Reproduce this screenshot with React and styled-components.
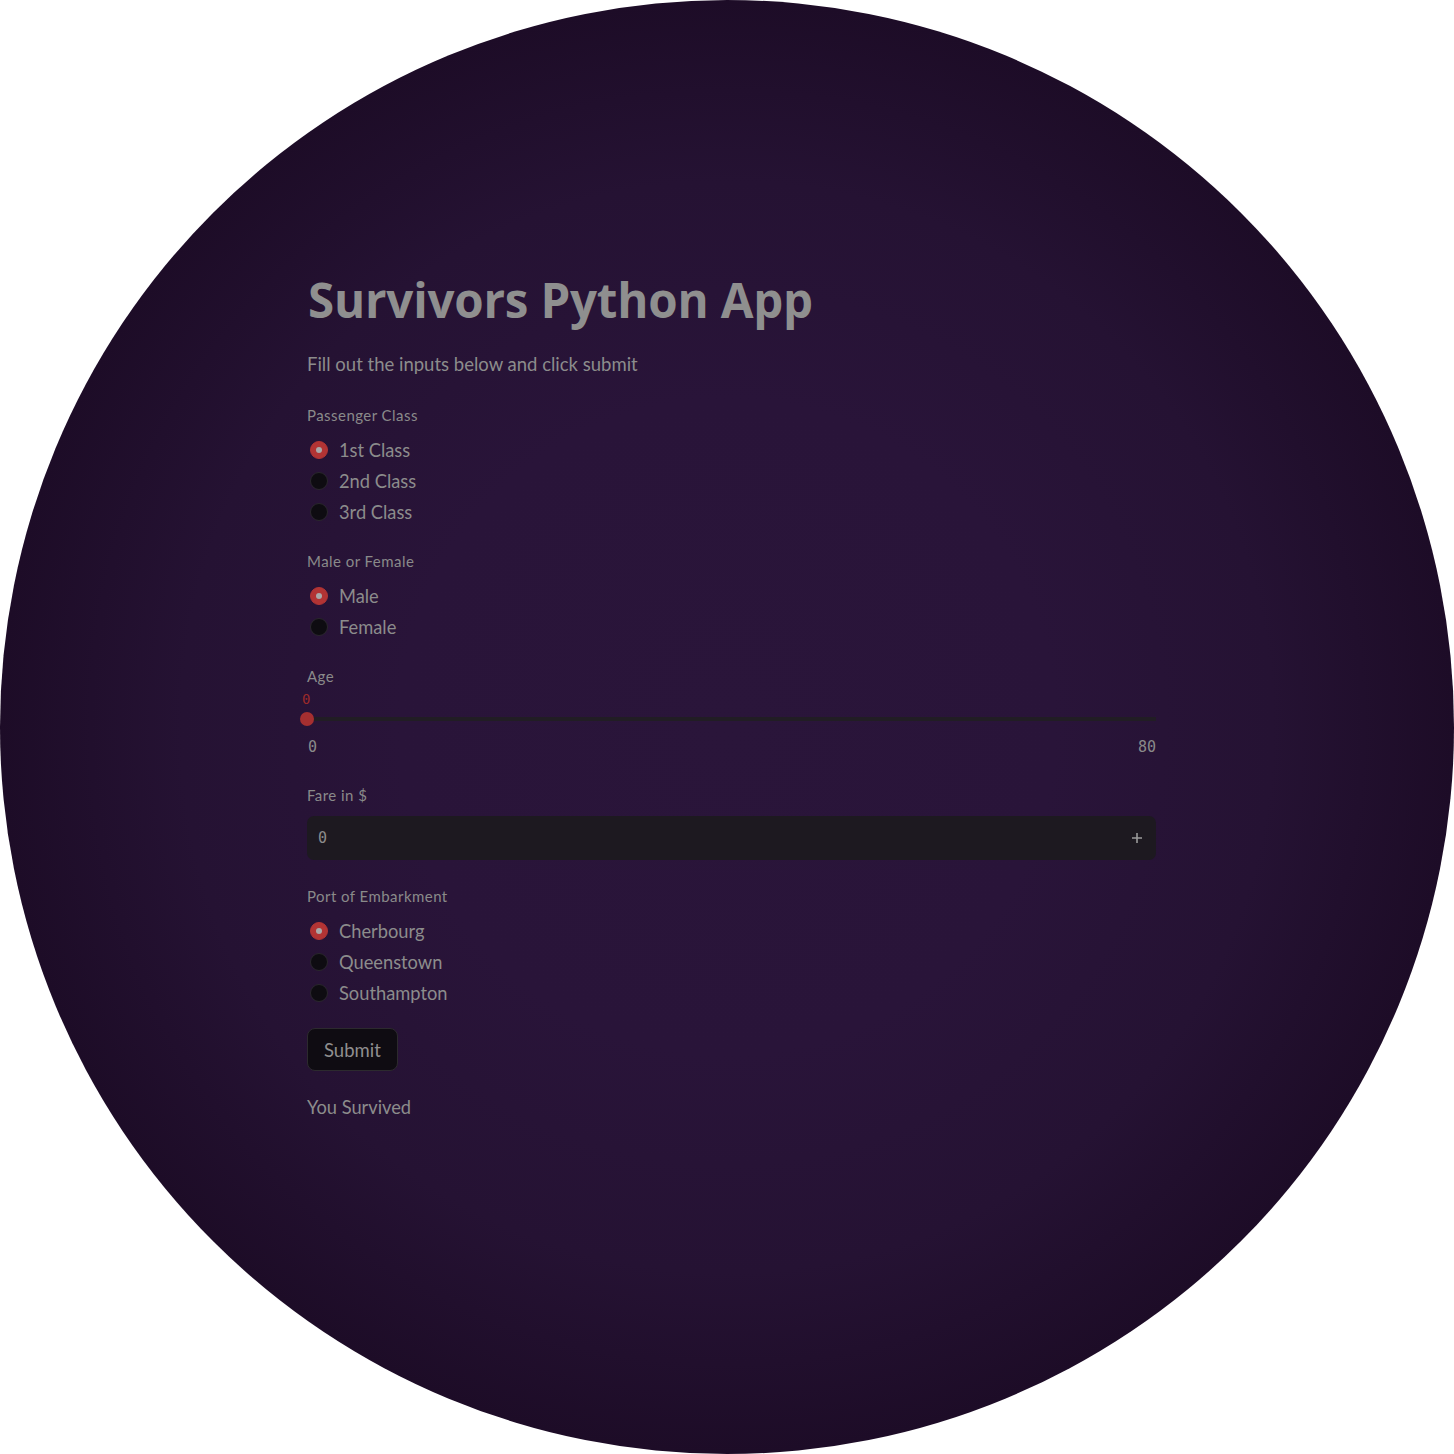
import React from 'react';
import styled, { createGlobalStyle } from 'styled-components';

const GlobalStyle = createGlobalStyle`
  html, body {
    margin: 0;
    padding: 0;
    background: #ffffff;
  }
`;

const Disc = styled.div`
  width: 1454px;
  height: 1454px;
  border-radius: 50%;
  background: radial-gradient(closest-side, #2a153a 0%, #291439 45%, #251233 75%, #1d0c27 100%);
  overflow: hidden;
  box-sizing: border-box;
  padding: 270px 298px 0 307px;
  font-family: Lato, "Noto Sans", sans-serif;
  color: #8c8c8c;
`;

const Title = styled.h1`
  margin: 0 0 22px 1px;
  font-family: "Open Sans", Lato, sans-serif;
  font-size: 47.5px;
  font-weight: 700;
  line-height: 60px;
  letter-spacing: -0.2px;
  color: #8f8f8f;
`;

const Lead = styled.p`
  margin: 0 0 29px;
  font-size: 18.5px;
  line-height: 24px;
`;

const Field = styled.div`
  display: flex;
  flex-direction: column;
  margin-bottom: ${p => p.$gap || 24}px;
`;

const Label = styled.div`
  font-size: 15px;
  line-height: 20px;
  letter-spacing: 0.45px;
  color: #8a8a8a;
  margin-bottom: ${p => p.$gap || 10}px;
`;

const RadioList = styled.div`
  display: flex;
  flex-direction: column;
`;

const RadioRow = styled.div`
  display: flex;
  align-items: center;
  height: 31px;
  gap: 11px;
  padding-left: 3px;
  font-size: 18.3px;
`;

const Dot = styled.span`
  width: 18px;
  height: 18px;
  border-radius: 50%;
  box-sizing: border-box;
  flex-shrink: 0;
  display: flex;
  align-items: center;
  justify-content: center;
  background: ${p => (p.$on ? '#b23434' : '#0e0c11')};
  border: 1px solid ${p => (p.$on ? '#b23434' : '#2a272d')};
  &::after {
    content: '';
    display: ${p => (p.$on ? 'block' : 'none')};
    width: 6px;
    height: 6px;
    border-radius: 50%;
    background: #a9a9a9;
  }
`;

const Mono = styled.div`
  font-family: "DejaVu Sans Mono", "Liberation Mono", monospace;
  font-size: 14px;
  line-height: 16px;
`;

const ThumbValue = styled(Mono)`
  color: #9b2a2a;
  margin-left: -5px;
  height: 16px;
`;

const Track = styled.div`
  position: relative;
  height: 4px;
  margin: 10px 0 0;
  background: #211d24;
`;

const Thumb = styled.span`
  position: absolute;
  left: -7px;
  top: -5px;
  width: 14px;
  height: 14px;
  border-radius: 50%;
  background: #a52f30;
`;

const Ticks = styled(Mono)`
  display: flex;
  justify-content: space-between;
  font-size: 15px;
  margin-top: 18px;
  padding-left: 1px;
  color: #8a8a8a;
`;

const InputBox = styled.div`
  height: 44px;
  box-sizing: border-box;
  border-radius: 7px;
  background: #1d1920;
  display: flex;
  align-items: center;
  justify-content: space-between;
  padding: 0 13px 0 11px;
`;

const InputValue = styled(Mono)`
  font-size: 15px;
  color: #8c8c8c;
`;

const Plus = styled.svg`
  width: 12px;
  height: 12px;
`;

const Button = styled.button`
  align-self: flex-start;
  height: 43px;
  padding: 0 16px;
  border-radius: 8px;
  border: 1px solid #2c2a2e;
  background: #0f0c12;
  color: #8f8f8f;
  font-family: Lato, "Noto Sans", sans-serif;
  font-size: 18.5px;
  margin-bottom: 24px;
`;

const Result = styled.div`
  font-size: 18.3px;
  line-height: 24px;
`;

function RadioGroup({ label, options, gap = 22 }) {
  return (
    <Field $gap={gap}>
      <Label $gap={9}>{label}</Label>
      <RadioList>
        {options.map((o, i) => (
          <RadioRow key={o}>
            <Dot $on={i === 0} />
            <span>{o}</span>
          </RadioRow>
        ))}
      </RadioList>
    </Field>
  );
}

export default function App() {
  return (
    <>
      <GlobalStyle />
      <Disc>
        <Title>Survivors Python App</Title>
        <Lead>Fill out the inputs below and click submit</Lead>
        <RadioGroup label="Passenger Class" options={['1st Class', '2nd Class', '3rd Class']} gap={24} />
        <RadioGroup label="Male or Female" options={['Male', 'Female']} gap={24} />
        <Field $gap={30}>
          <Label $gap={5}>Age</Label>
          <ThumbValue>0</ThumbValue>
          <Track>
            <Thumb />
          </Track>
          <Ticks>
            <span>0</span>
            <span>80</span>
          </Ticks>
        </Field>
        <Field $gap={26}>
          <Label $gap={11}>Fare in $</Label>
          <InputBox>
            <InputValue>0</InputValue>
            <Plus viewBox="0 0 12 12">
              <path d="M6 1v10M1 6h10" stroke="#9a9a9a" strokeWidth="1.6" />
            </Plus>
          </InputBox>
        </Field>
        <RadioGroup label="Port of Embarkment" options={['Cherbourg', 'Queenstown', 'Southampton']} gap={20} />
        <Button>Submit</Button>
        <Result>You Survived</Result>
      </Disc>
    </>
  );
}
